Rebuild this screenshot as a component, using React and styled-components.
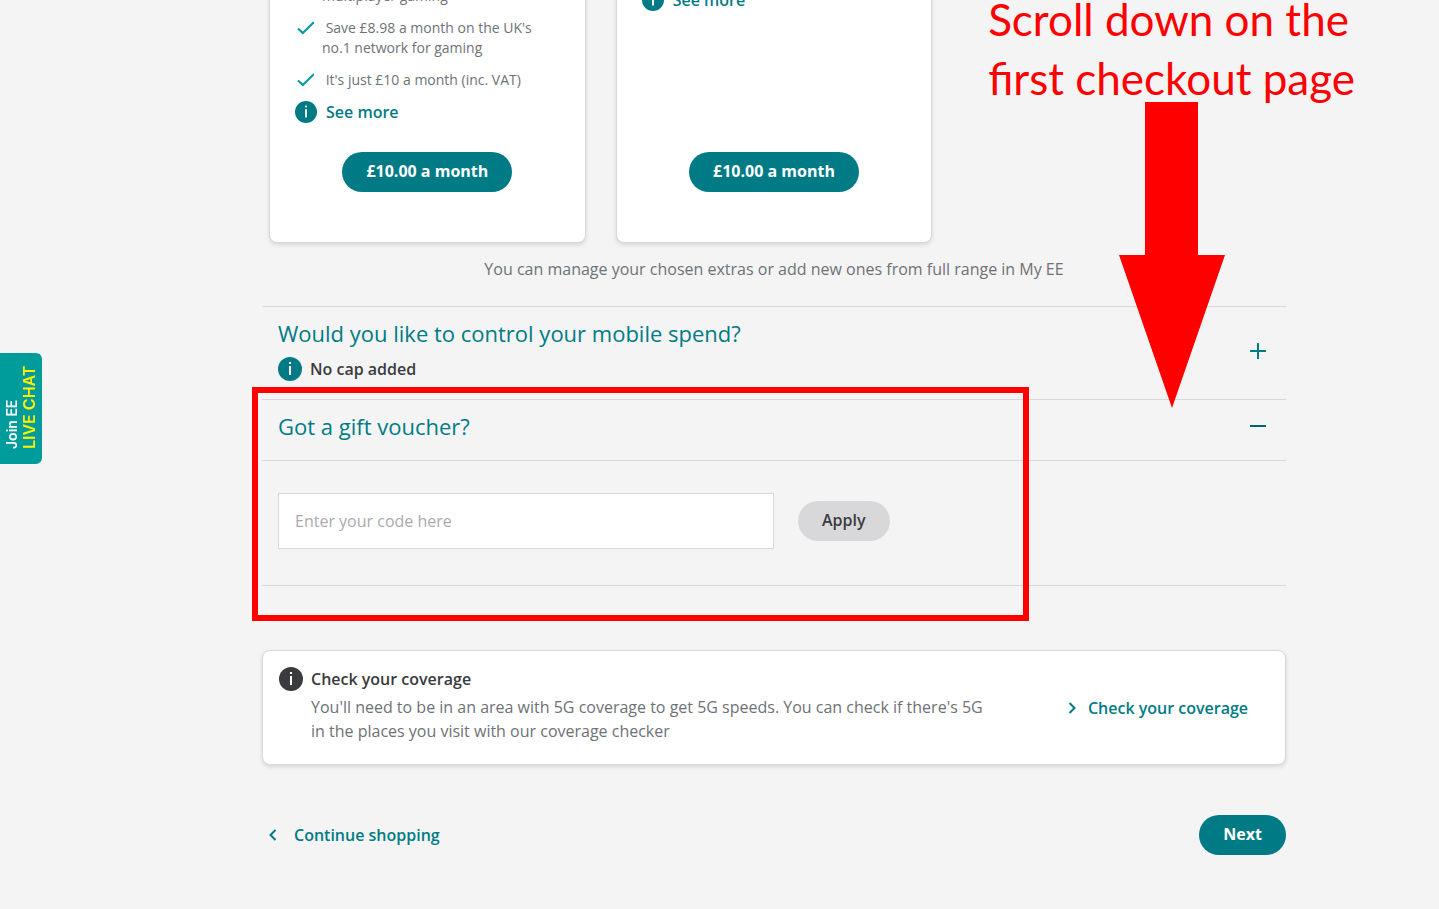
import React, { useState } from "react";
import styled, { createGlobalStyle } from "styled-components";

const teal = "#007b85";
const grey = "#6e7276";
const dark = "#3a3b3e";
const line = "#d6d8d9";

const GlobalStyle = createGlobalStyle`
  * {
    box-sizing: border-box;
  }
  body {
    margin: 0;
    background: #f4f4f4;
    color: ${grey};
    font-family: "Open Sans", sans-serif;
    font-size: 16px;
    line-height: 24px;
  }
  h2, h3, p, ul {
    margin: 0;
    padding: 0;
  }
  button, input {
    font: inherit;
  }
`;

const Page = styled.div`
  position: relative;
  margin-top: -24px;
`;

const Main = styled.main`
  padding: 0 153px 0 262px;
`;

const Cards = styled.div`
  display: grid;
  grid-template-columns: repeat(3, 1fr);
  gap: 30px;
  padding: 0 7px;
`;

const Card = styled.section`
  display: flex;
  flex-direction: column;
  align-items: flex-start;
  height: 267px;
  padding: 9px 25px 50px;
  background: white;
  border: 1px solid ${line};
  border-radius: 8px;
  box-shadow: 0 2px 4px rgba(0, 0, 0, 0.12);
`;

const Perks = styled.ul`
  display: flex;
  flex-direction: column;
  gap: 12px;
  margin-bottom: 8px;
  padding-right: 16px;
  list-style: none;
`;

const Perk = styled.li`
  display: flex;
  gap: 8px;
  font-size: 14px;
  line-height: 20px;

  svg {
    flex: none;
  }
`;

const SeeMore = styled.a`
  display: flex;
  align-items: center;
  gap: 9px;
  height: 28px;
  color: ${teal};
  font-weight: 600;
  text-decoration: none;
`;

const Pill = styled.button`
  height: 40px;
  padding: 0 24px 2px;
  border: none;
  border-radius: 20px;
  background: ${props => (props.$muted ? "#d8d8da" : teal)};
  color: ${props => (props.$muted ? dark : "white")};
  font-weight: ${props => (props.$muted ? 600 : 700)};
  cursor: pointer;
`;

const CardPill = styled(Pill)`
  margin: auto auto 0;
`;

const Note = styled.p`
  padding: 14px 0 25px;
  text-align: center;
`;

const Section = styled.section`
  position: relative;
  border-top: 1px solid ${line};
`;

const SectionHead = styled.div`
  display: flex;
  align-items: center;
  justify-content: space-between;
  padding: ${props => (props.$open ? "10px 16px 18px" : "10px 16px 15px")};
`;

const SectionTitle = styled.h2`
  color: ${teal};
  font-size: 22px;
  font-weight: 400;
  line-height: 32px;
`;

const Status = styled.div`
  display: flex;
  align-items: center;
  gap: 8px;
  height: 24px;
  margin-top: 8px;
  margin-bottom: 3px;
  color: ${dark};
  font-weight: 600;
`;

const Toggle = styled.button`
  display: flex;
  padding: 4px;
  border: none;
  background: none;
  color: ${teal};
  cursor: pointer;
`;

const VoucherForm = styled.form`
  display: flex;
  align-items: center;
  gap: 24px;
  padding: 32px 16px 36px;
  border-top: 1px solid ${line};
  border-bottom: 1px solid ${line};
`;

const CodeInput = styled.input`
  width: 50%;
  height: 56px;
  padding: 0 16px;
  border: 1px solid ${line};
  background: white;
  color: ${dark};

  &::placeholder {
    color: #a9abad;
  }
`;

const Highlight = styled.div`
  position: absolute;
  top: -13px;
  right: 257px;
  bottom: -35px;
  left: -10px;
  border: 6px solid red;
  pointer-events: none;
`;

const Coverage = styled.section`
  display: flex;
  align-items: center;
  justify-content: space-between;
  margin-top: 64px;
  padding: 16px 37px 21px 16px;
  background: white;
  border: 1px solid ${line};
  border-radius: 8px;
  box-shadow: 0 2px 4px rgba(0, 0, 0, 0.12);
`;

const CoverageInfo = styled.div`
  display: flex;
  gap: 8px;

  svg {
    flex: none;
  }
`;

const CoverageTitle = styled.h3`
  margin-bottom: 4px;
  color: ${dark};
  font-size: 16px;
  font-weight: 600;
`;

const CoverageText = styled.p`
  max-width: 680px;
`;

const ArrowLink = styled.a`
  display: flex;
  align-items: center;
  gap: ${props => props.$gap}px;
  color: ${teal};
  font-weight: 600;
  text-decoration: none;
  white-space: nowrap;
`;

const CoverageLink = styled(ArrowLink)`
  padding-top: 6px;
`;

const Footer = styled.footer`
  display: flex;
  align-items: center;
  justify-content: space-between;
  padding: 50px 0 54px 7px;
`;

const Chat = styled.button`
  position: fixed;
  top: 353px;
  left: 0;
  display: flex;
  flex-direction: column;
  width: 42px;
  height: 111px;
  padding: 15px 4px;
  border: none;
  border-radius: 6px 0 0 6px;
  background: #009c9c;
  color: white;
  font-family: Inter, sans-serif;
  font-size: 14px;
  font-weight: 600;
  line-height: 16px;
  text-align: left;
  white-space: nowrap;
  writing-mode: vertical-rl;
  transform: rotate(180deg);
  cursor: pointer;
`;

const ChatStrong = styled.span`
  color: #fff200;
  font-size: 16px;
  line-height: 18px;
`;

const Callout = styled.div`
  position: absolute;
  top: 14px;
  right: 84px;
  display: flex;
  flex-direction: column;
  color: red;
  font-family: Lato, sans-serif;
  font-size: 44px;
  line-height: 59px;
  white-space: nowrap;
  pointer-events: none;
`;

const CalloutArrow = styled.svg`
  position: absolute;
  top: 126px;
  right: 214px;
  pointer-events: none;
`;

const InfoIcon = ({ size = 24, color = teal }) => (
  <svg width={size} height={size} viewBox="0 0 24 24" aria-hidden="true">
    <circle cx="12" cy="12" r="12" fill={color} />
    <rect x="11" y="5" width="2" height="2" fill="white" />
    <rect x="11" y="9" width="2" height="9" fill="white" />
  </svg>
);

const Tick = () => (
  <svg width="19" height="20" viewBox="0 0 19 20" fill="none" aria-hidden="true">
    <path d="M3 10.5 L7.8 15 L19 4" stroke="#009c9c" strokeWidth="2" />
  </svg>
);

const Chevron = ({ left }) => (
  <svg width="8" height="12" viewBox="0 0 8 12" fill="none" aria-hidden="true">
    <path
      d={left ? "M6.5 1 L1.5 6 L6.5 11" : "M1.5 1 L6.5 6 L1.5 11"}
      stroke={teal}
      strokeWidth="2"
    />
  </svg>
);

const PlusMinus = ({ open }) => (
  <svg width="16" height="16" viewBox="0 0 16 16" aria-hidden="true">
    <rect y="7" width="16" height="2" fill={open ? "#00646d" : teal} />
    {!open && <rect x="7" width="2" height="16" fill={teal} />}
  </svg>
);

const perks = [
  "multiplayer gaming",
  "\u00a0Save £8.98 a month on the UK's no.1 network for gaming",
  "\u00a0It's just £10 a month (inc. VAT)"
];

export default () => {
  const [code, setCode] = useState("");

  return (
    <>
      <GlobalStyle />
      <Page>
        <Main>
          <Cards>
            <Card>
              <Perks>
                {perks.map((perk, i) => (
                  <Perk key={perk}>
                    {i === 0 ? <svg width="19" height="20" /> : <Tick />}
                    <span>{perk}</span>
                  </Perk>
                ))}
              </Perks>
              <SeeMore href="#gaming">
                <InfoIcon size={22} />
                See more
              </SeeMore>
              <CardPill type="button">£10.00 a month</CardPill>
            </Card>
            <Card>
              <SeeMore href="#extra">
                <InfoIcon size={22} />
                See more
              </SeeMore>
              <CardPill type="button">£10.00 a month</CardPill>
            </Card>
          </Cards>
          <Note>You can manage your chosen extras or add new ones from full range in My EE</Note>
          <Section>
            <SectionHead>
              <div>
                <SectionTitle>Would you like to control your mobile spend?</SectionTitle>
                <Status>
                  <InfoIcon />
                  No cap added
                </Status>
              </div>
              <Toggle type="button" aria-label="Expand spend cap">
                <PlusMinus />
              </Toggle>
            </SectionHead>
          </Section>
          <Section>
            <SectionHead $open>
              <SectionTitle>Got a gift voucher?</SectionTitle>
              <Toggle type="button" aria-label="Collapse gift voucher">
                <PlusMinus open />
              </Toggle>
            </SectionHead>
            <VoucherForm onSubmit={e => e.preventDefault()}>
              <CodeInput
                type="text"
                aria-label="Gift voucher code"
                placeholder="Enter your code here"
                value={code}
                onChange={e => setCode(e.target.value)}
              />
              <Pill $muted type="submit">Apply</Pill>
            </VoucherForm>
            <Highlight />
          </Section>
          <Coverage>
            <CoverageInfo>
              <InfoIcon color={dark} />
              <div>
                <CoverageTitle>Check your coverage</CoverageTitle>
                <CoverageText>
                  You'll need to be in an area with 5G coverage to get 5G speeds. You can check if there's 5G in the places you visit with our coverage checker
                </CoverageText>
              </div>
            </CoverageInfo>
            <CoverageLink $gap={12} href="#coverage">
              <Chevron />
              Check your coverage
            </CoverageLink>
          </Coverage>
          <Footer>
            <ArrowLink $gap={17} href="#shop">
              <Chevron left />
              Continue shopping
            </ArrowLink>
            <Pill type="button">Next</Pill>
          </Footer>
        </Main>
        <Callout>
          <span>Scroll down on the</span>
          <span>first checkout page</span>
        </Callout>
        <CalloutArrow width="106" height="306" viewBox="0 0 106 306" aria-hidden="true">
          <path d="M26 0 H79 V153 H106 L53 306 L0 153 H26 Z" fill="red" />
        </CalloutArrow>
      </Page>
      <Chat type="button">
        <span>Join EE</span>
        <ChatStrong>LIVE CHAT</ChatStrong>
      </Chat>
    </>
  );
};
